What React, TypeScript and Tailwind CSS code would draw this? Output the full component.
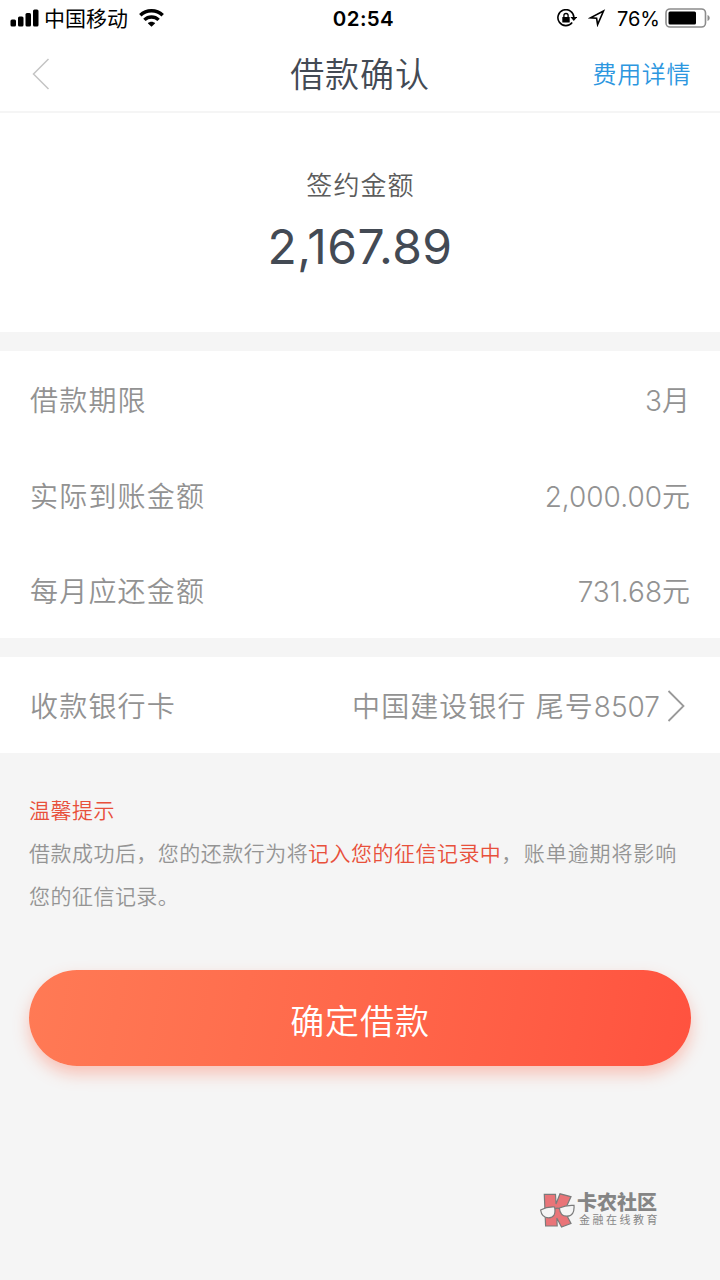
import { type ReactNode } from 'react';

/** Loan confirmation screen: amount, terms, payout card and the submit button. */

interface DetailRow {
  label: string;
  value: string;
}

const DETAILS: DetailRow[] = [
  { label: '借款期限', value: '3月' },
  { label: '实际到账金额', value: '2,000.00元' },
  { label: '每月应还金额', value: '731.68元' },
];

function StatusBar() {
  return (
    <div className="flex h-9 items-center justify-between pl-[10px] pr-[9px] text-black">
      <div className="flex w-[240px] items-center">
        <svg width="29" height="18" viewBox="0 0 29 18" fill="currentColor">
          <rect x="0.5" y="10.5" width="5.5" height="7" rx="1.5" />
          <rect x="8" y="7.5" width="5.5" height="10" rx="1.5" />
          <rect x="15.5" y="4" width="5.5" height="13.5" rx="1.5" />
          <rect x="23" y="0.5" width="5.5" height="17" rx="1.5" />
        </svg>
        <span className="ml-[5px] pt-[2px] text-[21px] leading-9">中国移动</span>
        <svg className="ml-[11px]" width="25" height="18" viewBox="0 0 25 18" fill="none" stroke="currentColor" strokeWidth="3.4">
          <path d="M1.3 6.3C7.5 0.2 17.5 0.2 23.7 6.3" />
          <path d="M5.4 10.9C9.4 7 15.6 7 19.6 10.9" />
          <path d="M8.8 14.2C10.9 12.2 14.1 12.2 16.2 14.2L12.5 17.8Z" fill="currentColor" stroke="none" />
        </svg>
      </div>
      <span className="pl-[6px] pt-[2px] text-[20.5px] font-semibold leading-9 tracking-[0.4px]">02:54</span>
      <div className="flex w-[240px] items-center justify-end">
        <svg width="20" height="18" viewBox="0 0 20 18" fill="none" stroke="currentColor" strokeWidth="1.6">
          <path d="M15.2 13.6A8 8 0 1 1 16.9 8.3" />
          <path d="M13.4 8H20.2L16.8 12Z" fill="currentColor" stroke="none" />
          <rect x="5.3" y="8" width="7.4" height="5.6" rx="0.6" fill="currentColor" stroke="none" />
          <path d="M6.9 8.2V6.6a2.1 2.1 0 0 1 4.2 0v1.6" strokeWidth="1.3" />
        </svg>
        <svg className="ml-[11px]" width="18" height="18" viewBox="0 0 18 18" fill="none" stroke="currentColor" strokeWidth="1.6" strokeLinejoin="miter">
          <path d="M15.5 2L2.4 8.9L8.6 9.3L9.6 15.6Z" />
        </svg>
        <span className="ml-[11px] pt-[2px] text-[20px] leading-9">76%</span>
        <svg className="ml-[5px]" width="46" height="20" viewBox="0 0 46 20">
          <rect x="1" y="1" width="39.5" height="18" rx="4" fill="none" stroke="#8c8c8c" strokeWidth="1.6" />
          <rect x="3.5" y="3.5" width="27.5" height="13" rx="1.5" fill="#000" />
          <path d="M42.5 7C45.4 8 45.4 12 42.5 13Z" fill="#8c8c8c" />
        </svg>
      </div>
    </div>
  );
}

function NavBar() {
  return (
    <div className="flex h-[77px] items-center justify-between border-b-2 border-[#f5f5f5] pl-[32px] pr-[29px]">
      <button type="button" className="w-[137px]">
        <svg width="18" height="32" viewBox="0 0 18 32" fill="none" stroke="#c4c4c4" strokeWidth="1.5">
          <path d="M16.5 1L1.5 16L16.5 31" />
        </svg>
      </button>
      <h1 className="pt-[3px] text-[34px] font-[350] leading-[48px] tracking-[0.9px] text-[#434a54]">借款确认</h1>
      <button type="button" className="w-[140px] pt-[2px] text-right text-[24px] font-[350] tracking-[0.6px] text-[#2d97df]">费用详情</button>
    </div>
  );
}

function Row({ label, children }: { label: string; children: ReactNode }) {
  return (
    <div className="flex flex-1 items-center justify-between pl-[30px] pr-[30px] text-[28px] font-[350] text-[#929292]">
      <span className="pt-[4px] tracking-[1.2px]">{label}</span>
      <span className="flex items-center pt-[4px]">{children}</span>
    </div>
  );
}

function CommunityMark() {
  return (
    <div className="flex items-center pl-[540px] text-[#858585]">
      <svg width="35" height="38" viewBox="0 0 35 38" stroke="#7b7b7b" strokeWidth="1.2">
        <path d="M4.3 3.3H15.5L16 13L20 2.8L31 5.6L24.5 20L31 32.5L21.5 36L16.8 27L17.2 35H5.6Z" fill="#e97478" />
        <path d="M0.6 19Q7 15.5 14.6 16Q16.5 26.5 8.8 26.8Q1.8 27 0.6 19Z" fill="#f5f5f5" />
        <path d="M19.4 17Q26 13.8 34 14.4Q34.8 24.8 27 25.2Q20 25.3 19.4 17Z" fill="#f5f5f5" />
        <path d="M15 18Q17 16.5 19.4 17.8" fill="none" />
      </svg>
      <div className="ml-[2px] flex flex-col">
        <span className="text-[20px] font-black leading-[20px]">卡农社区</span>
        <span className="ml-[2px] text-[11px] leading-[15px] tracking-[2.5px]">金融在线教育</span>
      </div>
    </div>
  );
}

export default function App() {
  return (
    <div className="h-[1280px] w-[720px] overflow-hidden bg-[#f5f5f5] font-['Inter','Noto_Sans_CJK_SC',sans-serif]">
      <header className="bg-white">
        <StatusBar />
        <NavBar />
      </header>

      <section className="flex h-[219px] flex-col items-center bg-white pt-[53px]">
        <p className="pl-px text-[26px] font-[350] leading-10 tracking-[1.1px] text-[#5c5c5c]">签约金额</p>
        <p className="mt-[13px] text-[48px] leading-[56px] tracking-[0.4px] text-[#434a54]">2,167.89</p>
      </section>

      <section className="mt-[19px] flex h-[287px] flex-col bg-white">
        {DETAILS.map(({ label, value }) => (
          <Row key={label} label={label}>
            {value}
          </Row>
        ))}
      </section>

      <section className="mt-[19px] flex h-24 flex-col bg-white">
        <Row label="收款银行卡">
          <span className="tracking-[1.1px]">中国建设银行 尾号</span>8507
          <svg className="mb-[3px] ml-[7px] mr-[5px]" width="18" height="32" viewBox="0 0 18 32" fill="none" stroke="#999" strokeWidth="1.8">
            <path d="M1.5 1L16.5 16L1.5 31" />
          </svg>
        </Row>
      </section>

      <section className="pl-[29px] pt-[36px] text-[21px] font-[350] leading-[43px] tracking-[0.47px] text-[#949494]">
        <p className="text-[#e8503b]">温馨提示</p>
        <p className="whitespace-nowrap">
          借款成功后，您的还款行为将<span className="text-[#e8503b]">记入您的征信记录中</span>，
          <span className="pl-px tracking-[0.9px]">账单逾期将影响</span>
          <br />
          您的征信记录。
        </p>
      </section>

      <div className="px-[29px] pt-[52px]">
        <button
          type="button"
          className="h-24 w-full rounded-full bg-linear-100 from-[#ff7a55] to-[#ff523f] pt-[6px] text-[34px] font-[350] tracking-[0.9px] text-white shadow-[0_8px_16px_rgba(255,100,70,0.35)]"
        >
          确定借款
        </button>
      </div>

      <footer className="pt-[125px]">
        <CommunityMark />
      </footer>
    </div>
  );
}
